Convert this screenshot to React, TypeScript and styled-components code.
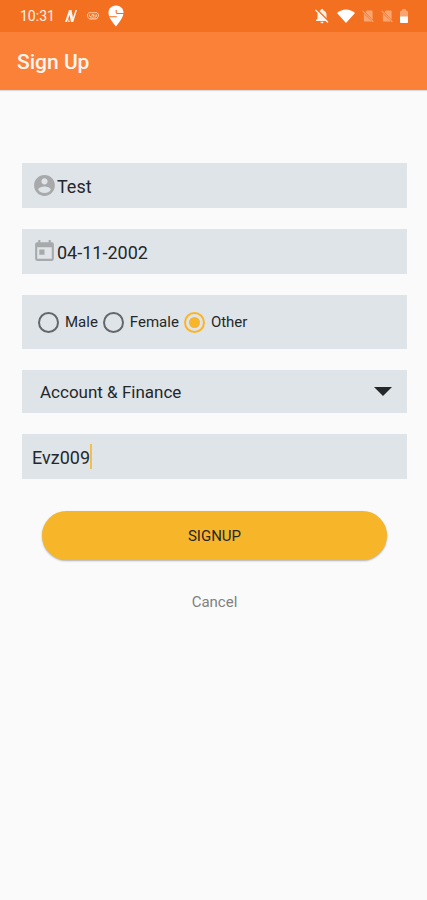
import React, { useState } from "react";
import styled, { createGlobalStyle } from "styled-components";

const GlobalStyle = createGlobalStyle`
  * { box-sizing: border-box; }
  body {
    margin: 0;
    background: #fafafa;
    color: #24282b;
    font-family: Roboto, "Liberation Sans", sans-serif;
  }
  button, input, select { font: inherit; color: inherit; }
`;

const StatusBar = styled.div`
  display: flex;
  align-items: center;
  justify-content: space-between;
  height: 32px;
  padding: 0 19px 0 20px;
  background: #f37021;
  color: #fff3ea;
  font-size: 14px;
`;

const StatusGroup = styled.div<{ $gap: number }>`
  display: flex;
  align-items: center;
  gap: ${(p) => p.$gap}px;
  svg { display: block; }
`;

const AppBar = styled.header`
  display: flex;
  align-items: center;
  height: 58px;
  padding: 2px 17px 0;
  background: #fb8138;
  box-shadow: 0 1px 1px rgba(0, 0, 0, 0.12);
`;

const Title = styled.h1`
  margin: 0;
  color: #fff6ef;
  font-size: 21px;
  line-height: 28px;
  font-weight: 500;
`;

const Form = styled.form`
  display: flex;
  flex-direction: column;
  gap: 21px;
  padding: 73px 20px 24px 22px;
`;

const Field = styled.label`
  display: flex;
  align-items: center;
  height: 45px;
  padding: 0 10px;
  background: #dfe4e9;
  svg { flex: none; display: block; }
`;

const TextInput = styled.input<{ $fit?: boolean }>`
  flex: ${(p) => (p.$fit ? "0 1 auto" : "1")};
  ${(p) => (p.$fit ? "field-sizing: content; caret-color: transparent;" : "caret-color: #f9b52a;")}
  min-width: 0;
  height: 100%;
  padding: 2px 0 0;
  border: 0;
  outline: 0;
  background: transparent;
  font-size: 18px;
`;

const Caret = styled.span`
  width: 2px;
  height: 25px;
  background: #f5bd4a;
`;

const RadioGroup = styled.div`
  display: flex;
  align-items: center;
  gap: 5px;
  height: 54px;
  padding: 0 16px;
  background: #dfe4e9;
`;

const RadioLabel = styled.label`
  display: flex;
  align-items: center;
  gap: 6px;
  font-size: 15px;
  line-height: 20px;
`;

const Radio = styled.input`
  appearance: none;
  display: grid;
  place-content: center;
  width: 21px;
  height: 21px;
  margin: 0;
  border: 2px solid #62676b;
  border-radius: 50%;
  &::before {
    content: "";
    width: 11px;
    height: 11px;
    border-radius: 50%;
  }
  &:checked { border-color: #f9b52a; }
  &:checked::before { background: #f9b52a; }
`;

const SelectBox = styled.div`
  display: grid;
  align-items: center;
  height: 43px;
  background: #dfe4e9;
  > * { grid-area: 1 / 1; }
  > svg { justify-self: end; margin-right: 15px; pointer-events: none; }
`;

const Select = styled.select`
  appearance: none;
  width: 100%;
  height: 100%;
  padding: 0 40px 0 18px;
  border: 0;
  outline: 0;
  background: transparent;
  font-size: 17px;
`;

const Actions = styled.div`
  display: flex;
  flex-direction: column;
  align-items: center;
  gap: 30px;
  padding: 11px 20px 0;
`;

const SubmitButton = styled.button`
  width: 100%;
  height: 49px;
  border: 0;
  border-radius: 25px;
  background: #f7b52a;
  box-shadow: 0 1px 2px rgba(0, 0, 0, 0.3);
  font-size: 15px;
  cursor: pointer;
`;

const CancelButton = styled.button`
  padding: 0 4px;
  border: 0;
  background: transparent;
  color: #808080;
  font-size: 15px;
  line-height: 24px;
  cursor: pointer;
`;

const NotificationIcon = () => (
  <svg width="14" height="14" viewBox="0 0 14 14" fill="#fff3ea">
    <path d="M5 1h2.500l1.500 7.500L11.500 1H13L9.300 13H7L5.500 6 3 13H1z" />
    <path d="M4.800 9.500L6 13H3.600z" opacity=".7" />
  </svg>
);

const BadgeIcon = () => (
  <svg width="12" height="8" viewBox="0 0 12 8" fill="none" stroke="#ffc9a3" strokeWidth="1">
    <path d="M2 .7h8l1.400 1.500v2L9.600 7H2.400L.6 5V2z" />
    <path d="M2.500 2.500v2h1.500M5 4.800V2.600h1.500v2M8 2.500v2h1.600v-2M3 6h6" />
  </svg>
);

const DeliveryIcon = () => (
  <svg width="16" height="22" viewBox="0 0 16 22">
    <path fill="#fff" d="M8 .5C3.800.5.5 3.600.5 7.600c0 5 3.500 9.300 7.500 13.900 3.500-4.400 7.500-9.500 7.500-13.900C15.500 3.600 12.200.5 8 .5z" />
    <path fill="none" stroke="#f37021" strokeWidth="1.100" d="M8.200 5v2.600q0 .9.900.9h6.900M0 11.700h8.800" />
  </svg>
);

const BellOffIcon = () => (
  <svg width="16" height="16" viewBox="0 0 16 16">
    <path fill="#fff3ea" d="M8 1c.8 0 1.200.5 1.200 1.200C11.500 2.800 12.500 4.500 12.500 7v3.500l1.500 1.700v.8H2v-.8l1.500-1.700V7c0-2.500 1.200-4.200 3.300-4.800C6.800 1.500 7.200 1 8 1zM6.500 13.700h3c0 1-.7 1.600-1.500 1.600s-1.500-.6-1.500-1.600z" />
    <path d="M2.700 1.300L15 13.600" stroke="#f37021" strokeWidth="1.400" />
    <path d="M1.500 2L14 14.500" stroke="#fff3ea" strokeWidth="1.300" />
  </svg>
);

const WifiIcon = () => (
  <svg width="18" height="14" viewBox="0 0 18 14">
    <path fill="#fff" d="M0 4C5-.7 13-.7 18 4L9 14z" />
  </svg>
);

const NoSimIcon = () => (
  <svg width="12" height="14" viewBox="0 0 13 14">
    <path fill="#f9a571" d="M5 1h5.500q1 0 1 1v9L3.800 3zM2 4.500l8.800 8.500H3q-1 0-1-1z" />
    <path d="M.7 1.500L12.300 13.300" stroke="#f9a571" strokeWidth="1.200" />
  </svg>
);

const BatteryIcon = () => (
  <svg width="8" height="14" viewBox="0 0 8 14">
    <path fill="#f9a571" d="M2.300 0h3.400v1.300L8 2.500V8H0V2.500l2.300-1.200z" />
    <path fill="#fff" d="M0 7.500h8V13q0 1-1 1H1q-1 0-1-1z" />
  </svg>
);

const PersonIcon = () => (
  <svg width="25" height="25" viewBox="0 0 24 24" fill="#a8a9ab">
    <path d="M12 2C6.480 2 2 6.480 2 12s4.480 10 10 10 10-4.480 10-10S17.520 2 12 2zm0 3c1.660 0 3 1.340 3 3s-1.340 3-3 3-3-1.340-3-3 1.340-3 3-3zm0 14.200c-2.500 0-4.710-1.280-6-3.220.030-1.990 4-3.080 6-3.080 1.990 0 5.970 1.090 6 3.080-1.290 1.940-3.500 3.220-6 3.220z" />
  </svg>
);

const CalendarIcon = () => (
  <svg width="25" height="25" viewBox="0 0 24 24" fill="#a8a9ab">
    <path d="M19 3h-1V1h-2v2H8V1H6v2H5c-1.110 0-2 .9-2 2v14c0 1.100.890 2 2 2h14c1.100 0 2-.9 2-2V5c0-1.100-.9-2-2-2zm0 16H5V8h14v11zM7 10h5v5H7z" />
  </svg>
);

const genders = ["Male", "Female", "Other"];

export default function App() {
  const [name, setName] = useState("Test");
  const [birthDate, setBirthDate] = useState("04-11-2002");
  const [gender, setGender] = useState("Other");
  const [department, setDepartment] = useState("Account & Finance");
  const [code, setCode] = useState("Evz009");

  return (
    <>
      <GlobalStyle />
      <StatusBar>
        <StatusGroup $gap={9}>
          <span>10:31</span>
          <NotificationIcon />
          <BadgeIcon />
          <DeliveryIcon />
        </StatusGroup>
        <StatusGroup $gap={7}>
          <BellOffIcon />
          <WifiIcon />
          <NoSimIcon />
          <NoSimIcon />
          <BatteryIcon />
        </StatusGroup>
      </StatusBar>
      <AppBar>
        <Title>Sign Up</Title>
      </AppBar>
      <Form onSubmit={(e) => e.preventDefault()}>
        <Field>
          <PersonIcon />
          <TextInput aria-label="Name" value={name} onChange={(e) => setName(e.target.value)} />
        </Field>
        <Field>
          <CalendarIcon />
          <TextInput aria-label="Date of birth" value={birthDate} onChange={(e) => setBirthDate(e.target.value)} />
        </Field>
        <RadioGroup role="radiogroup" aria-label="Gender">
          {genders.map((g) => (
            <RadioLabel key={g}>
              <Radio type="radio" name="gender" value={g} checked={gender === g} onChange={() => setGender(g)} />
              {g}
            </RadioLabel>
          ))}
        </RadioGroup>
        <SelectBox>
          <Select aria-label="Department" value={department} onChange={(e) => setDepartment(e.target.value)}>
            <option>Account &amp; Finance</option>
          </Select>
          <svg width="18" height="9" viewBox="0 0 18 9">
            <path d="M0 0h18L9 9z" fill="#24282b" />
          </svg>
        </SelectBox>
        <Field>
          <TextInput $fit aria-label="Employee code" value={code} onChange={(e) => setCode(e.target.value)} />
          <Caret />
        </Field>
        <Actions>
          <SubmitButton type="submit">SIGNUP</SubmitButton>
          <CancelButton type="button">Cancel</CancelButton>
        </Actions>
      </Form>
    </>
  );
}
